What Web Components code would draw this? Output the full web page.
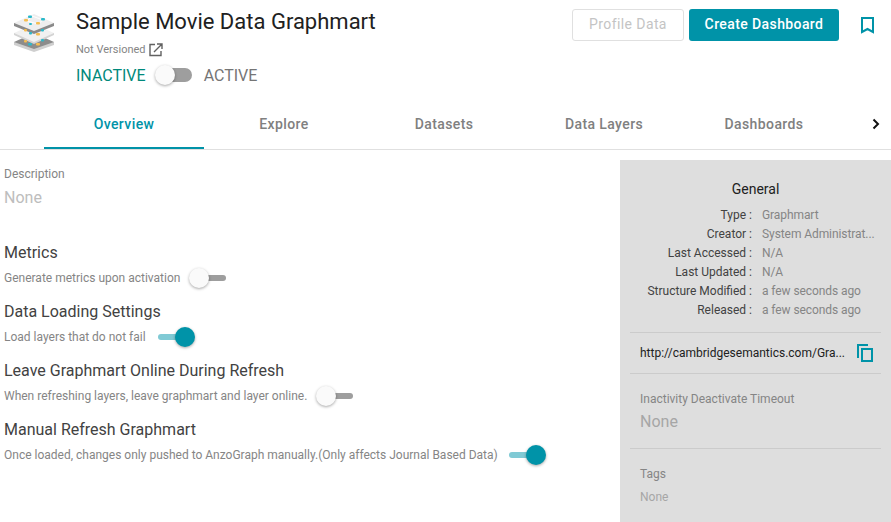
<!DOCTYPE html>
<html>
<head>
<meta charset="utf-8">
<title>Graphmart</title>
<style>
  html, body { margin: 0; padding: 0; height: 100%; overflow: hidden; background: #fff; }
  body { font-family: Roboto, "Liberation Sans", sans-serif; color: #212121; }
</style>
</head>
<body>
<gm-page></gm-page>

<script>
class GmToggle extends HTMLElement {
    connectedCallback() {
        const thick = this.hasAttribute('thick');
        this.attachShadow({ mode: 'open' });
        this.shadowRoot.innerHTML = `
            <style>
                :host {
                    display: inline-block;
                    position: relative;
                    width: 37px;
                    height: 20px;
                    flex: none;
                }
                .track {
                    position: absolute;
                    left: 10px;
                    right: 0;
                    top: ${thick ? 3 : 7}px;
                    height: ${thick ? 14 : 6}px;
                    border-radius: 7px;
                    background: #9e9e9e;
                }
                .thumb {
                    position: absolute;
                    left: 0;
                    top: 0;
                    width: 20px;
                    height: 20px;
                    border-radius: 50%;
                    background: #fafafa;
                    box-shadow: 0 1px 3px rgba(0, 0, 0, .35);
                }
                :host([on]) .track { left: 0; right: 10px; background: #80cad5; }
                :host([on]) .thumb { left: 17px; background: #0093a8; }
            </style>
            <div class="track"></div>
            <div class="thumb"></div>
        `;
    }
}
customElements.define('gm-toggle', GmToggle);

class GmLogo extends HTMLElement {
    connectedCallback() {
        this.attachShadow({ mode: 'open' });
        this.shadowRoot.innerHTML = `
            <style>
                :host { display: block; width: 40px; height: 39px; flex: none; }
                svg { display: block; filter: blur(.35px); }
            </style>
            <svg width="40" height="39" viewBox="0 0 40 39">
                <!-- bottom sheet -->
                <path d="M0 29v3l20 7 20-7v-3z" fill="#cfcfcf"/>
                <path d="M0 29l20-9 20 9-20 7z" fill="#8c8c8c"/>
                <!-- middle sheet -->
                <path d="M0 20v2l20 9 20-9v-2z" fill="#d4d4d4"/>
                <path d="M0 20l20-9 20 9-20 9z" fill="#f1f1f1"/>
                <!-- top sheet -->
                <path d="M0 10v3l20 8 20-8v-3z" fill="#8a8a8a"/>
                <path d="M0 10l20-9 20 9-20 8z" fill="#eeeeee"/>
                <path d="M13 8l5-5 11 4-5 4z" stroke="#fff" stroke-width=".9" fill="none"/>
                <g fill="#2bb9ca">
                    <rect x="14" y="2.500" width="4" height="2.500" rx="1"/><rect x="27" y="5" width="4" height="2.500" rx="1"/>
                    <rect x="15" y="10" width="3" height="2" rx="1"/>
                    <rect x="15" y="19" width="3" height="2.500" rx="1"/><rect x="27" y="16" width="3" height="2.500" rx="1"/>
                    <rect x="14" y="30" width="4" height="2.500" rx="1"/><rect x="27" y="26" width="3" height="2.500" rx="1"/>
                </g>
                <g fill="#f5bd4f">
                    <rect x="10" y="6" width="4" height="2.500" rx="1"/><rect x="22" y="9" width="4" height="2.500" rx="1"/>
                    <rect x="10" y="16" width="3" height="2.500" rx="1"/><rect x="22" y="20" width="4" height="2.500" rx="1"/>
                    <rect x="10" y="27" width="3" height="2.500" rx="1"/><rect x="22" y="30" width="4" height="2.500" rx="1"/>
                </g>
            </svg>
        `;
    }
}
customElements.define('gm-logo', GmLogo);

class GmHeader extends HTMLElement {
    connectedCallback() {
        this.attachShadow({ mode: 'open' });
        this.shadowRoot.innerHTML = `
            <style>
                :host {
                    display: flex;
                    height: 99px;
                    box-sizing: border-box;
                    padding: 13px 0 0 14px;
                }
                .info { margin-left: 22px; margin-top: -7px; }
                h1 {
                    margin: 0;
                    font-size: 22px;
                    font-weight: 400;
                    line-height: 32px;
                    color: #212121;
                }
                .version {
                    display: flex;
                    align-items: center;
                    margin-top: 1px;
                    height: 20px;
                    font-size: 11px;
                    color: #858585;
                }
                .version svg { margin-left: 3px; margin-top: 2px; }
                .state {
                    display: flex;
                    align-items: center;
                    margin-top: 5px;
                    height: 22px;
                    font-size: 16px;
                    color: #757575;
                }
                .state .off { color: #00897b; margin-right: 9px; }
                .state .on { margin-left: 12px; }
                .actions {
                    display: flex;
                    margin-left: auto;
                    margin-top: -4px;
                    height: 32px;
                }
                button {
                    font: 500 14px Roboto, sans-serif;
                    letter-spacing: .4px;
                    height: 32px;
                    box-sizing: border-box;
                    border-radius: 3px;
                    padding: 0 0 2px;
                }
                .profile {
                    width: 112px;
                    background: #fff;
                    border: 1px solid #e0e0e0;
                    color: #c4c4c4;
                    font-weight: 400;
                }
                .create {
                    width: 150px;
                    margin-left: 5px;
                    background: #0093a8;
                    border: 0;
                    color: #fff;
                }
                .mark { margin: 8px 17px 0 22px; display: block; }
            </style>
            <gm-logo></gm-logo>
            <div class="info">
                <h1>Sample Movie Data Graphmart</h1>
                <div class="version">Not Versioned
                    <svg width="14" height="14" viewBox="0 0 14 14" fill="none" stroke="#616161" stroke-width="1.4">
                        <path d="M6 1.500H1v11h11V8M5 9l7.500-7.500M8 1h5v5"/>
                    </svg>
                </div>
                <div class="state">
                    <span class="off">INACTIVE</span>
                    <gm-toggle thick></gm-toggle>
                    <span class="on">ACTIVE</span>
                </div>
            </div>
            <div class="actions">
                <button class="profile">Profile Data</button>
                <button class="create">Create Dashboard</button>
                <svg class="mark" width="13" height="17" viewBox="0 0 13 17" fill="none" stroke="#0093a8" stroke-width="2">
                    <path d="M1 1h11v14l-5.500-3L1 15z"/>
                </svg>
            </div>
        `;
    }
}
customElements.define('gm-header', GmHeader);

class GmTabs extends HTMLElement {
    connectedCallback() {
        const names = ['Overview', 'Explore', 'Datasets', 'Data Layers', 'Dashboards'];
        this.attachShadow({ mode: 'open' });
        this.shadowRoot.innerHTML = `
            <style>
                :host {
                    display: flex;
                    height: 51px;
                    box-sizing: border-box;
                    padding-left: 44px;
                    border-bottom: 1px solid #e0e0e0;
                }
                .tab {
                    width: 160px;
                    height: 50px;
                    box-sizing: border-box;
                    display: flex;
                    align-items: center;
                    justify-content: center;
                    font-size: 14px;
                    font-weight: 500;
                    letter-spacing: .4px;
                    color: #808080;
                }
                .tab.active { color: #0093a8; box-shadow: inset 0 -2px 0 #0093a8; }
                svg { margin: 19px 0 0 28px; }
            </style>
            ${names.map((n, i) => `<div class="tab${i === 0 ? ' active' : ''}">${n}</div>`).join('')}
            <svg width="8" height="12" viewBox="0 0 8 12" fill="none" stroke="#111" stroke-width="2"><path d="M1.500 1.500L6 6l-4.500 4.500"/></svg>
        `;
    }
}
customElements.define('gm-tabs', GmTabs);

class GmSetting extends HTMLElement {
    connectedCallback() {
        const on = this.hasAttribute('on');
        this.attachShadow({ mode: 'open' });
        this.shadowRoot.innerHTML = `
            <style>
                :host { display: block; height: 59px; }
                .title { font-size: 16px; line-height: 24px; color: #424242; }
                .row {
                    display: flex;
                    align-items: center;
                    height: 24px;
                    margin-top: 1px;
                    font-size: 12px;
                    color: #858585;
                }
                gm-toggle { margin-left: var(--gap, 8px); }
            </style>
            <div class="title">${this.getAttribute('label')}</div>
            <div class="row">
                <span>${this.getAttribute('hint')}</span>
                <gm-toggle ${on ? 'on' : ''}></gm-toggle>
            </div>
        `;
    }
}
customElements.define('gm-setting', GmSetting);

class GmSidePanel extends HTMLElement {
    connectedCallback() {
        const rows = [
            ['Type', 'Graphmart'],
            ['Creator', 'System Administrat...'],
            ['Last Accessed', 'N/A'],
            ['Last Updated', 'N/A'],
            ['Structure Modified', 'a few seconds ago'],
            ['Released', 'a few seconds ago']
        ];
        this.attachShadow({ mode: 'open' });
        this.shadowRoot.innerHTML = `
            <style>
                :host {
                    display: block;
                    width: 271px;
                    height: 362px;
                    flex: none;
                    box-sizing: border-box;
                    background: #dedede;
                    padding: 0 10px;
                    overflow: hidden;
                }
                h2 {
                    margin: 19px 0 0;
                    font-size: 14px;
                    font-weight: 400;
                    line-height: 20px;
                    text-align: center;
                    color: #212121;
                }
                .grid {
                    display: grid;
                    grid-template-columns: 122px 1fr;
                    column-gap: 10px;
                    margin-top: 7px;
                    font-size: 12px;
                    line-height: 19px;
                }
                .k { text-align: right; color: #424242; }
                .v { color: #858585; white-space: nowrap; letter-spacing: -.08px; }
                .uri {
                    display: flex;
                    align-items: center;
                    justify-content: space-between;
                    height: 40px;
                    margin-top: 12px;
                    padding: 0 8px 0 10px;
                    border-top: 1px solid #cbcbcb;
                    border-bottom: 1px solid #cbcbcb;
                    font-size: 12px;
                    color: #212121;
                }
                .block { padding-left: 10px; }
                .label { font-size: 12px; line-height: 16px; color: #858585; }
                .big { font-size: 16px; line-height: 24px; color: #a6a6a6; margin-top: 3px; }
                .small { font-size: 12px; line-height: 16px; color: #a6a6a6; margin-top: 7px; }
                .timeout { height: 75px; box-sizing: border-box; padding-top: 17px; border-bottom: 1px solid #cbcbcb; }
                .tags { padding-top: 17px; }
            </style>
            <h2>General</h2>
            <div class="grid">
                ${rows.map(r => `<div class="k">${r[0]} :</div><div class="v">${r[1]}</div>`).join('')}
            </div>
            <div class="uri">
                <span>http://cambridgesemantics.com/Gra...</span>
                <svg width="16" height="18" viewBox="0 0 16 18" fill="none" stroke="#0093a8" stroke-width="2">
                    <path d="M1 14V1h10M5 5h10v12H5z"/>
                </svg>
            </div>
            <div class="block timeout">
                <div class="label">Inactivity Deactivate Timeout</div>
                <div class="big">None</div>
            </div>
            <div class="block tags">
                <div class="label">Tags</div>
                <div class="small">None</div>
            </div>
        `;
    }
}
customElements.define('gm-side-panel', GmSidePanel);

class GmPage extends HTMLElement {
    connectedCallback() {
        this.attachShadow({ mode: 'open' });
        this.shadowRoot.innerHTML = `
            <style>
                :host { display: block; width: 891px; height: 522px; overflow: hidden; }
                .body { display: flex; justify-content: space-between; padding-top: 10px; }
                .main { padding-left: 4px; }
                .desc-label { font-size: 12px; line-height: 16px; color: #858585; margin-top: 6px; }
                .desc-value { font-size: 16px; line-height: 24px; color: #bdbdbd; margin-top: 4px; }
                .settings { margin-top: 31px; }
            </style>
            <gm-header></gm-header>
            <gm-tabs></gm-tabs>
            <div class="body">
                <div class="main">
                    <div class="desc-label">Description</div>
                    <div class="desc-value">None</div>
                    <div class="settings">
                        <gm-setting style="--gap:9px" label="Metrics" hint="Generate metrics upon activation"></gm-setting>
                        <gm-setting style="--gap:12px" on label="Data Loading Settings" hint="Load layers that do not fail"></gm-setting>
                        <gm-setting style="--gap:9px" label="Leave Graphmart Online During Refresh" hint="When refreshing layers, leave graphmart and layer online."></gm-setting>
                        <gm-setting style="--gap:11px" on label="Manual Refresh Graphmart" hint="Once loaded, changes only pushed to AnzoGraph manually.(Only affects Journal Based Data)"></gm-setting>
                    </div>
                </div>
                <gm-side-panel></gm-side-panel>
            </div>
        `;
    }
}
customElements.define('gm-page', GmPage);
</script>
</body>
</html>
